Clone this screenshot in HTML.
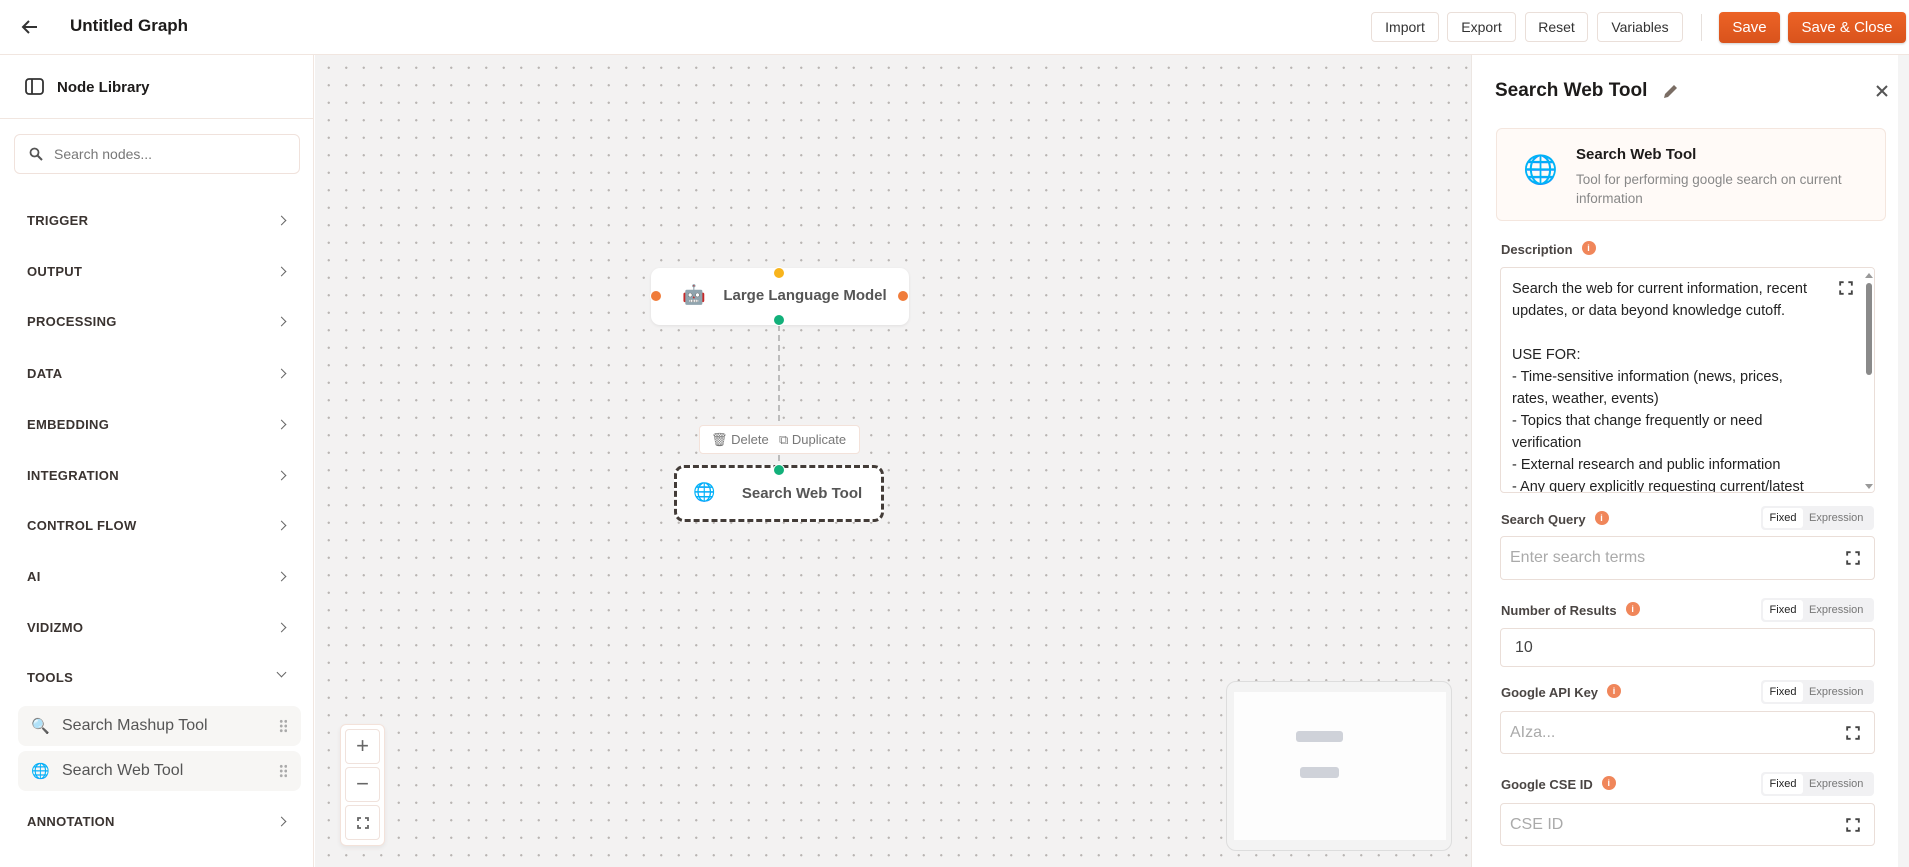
<!DOCTYPE html>
<html><head><meta charset="utf-8"><style>
*{box-sizing:border-box;margin:0;padding:0}
body{width:1909px;height:867px;overflow:hidden;font-family:"Liberation Sans",Arial,sans-serif;background:#fff;position:relative;color:#222}
.abs{position:absolute}
.hdr{left:0;top:0;width:1909px;height:55px;border-bottom:1px solid #f1e6e0;background:#fff}
.btn{position:absolute;top:12px;height:30px;border:1px solid #eadfd9;border-radius:4px;font-size:14px;color:#333;display:flex;align-items:center;justify-content:center;background:#fff}
.obtn{position:absolute;top:12px;height:31px;border-radius:4px;background:linear-gradient(#ec6326,#d9531c);color:#fff;font-size:15px;display:flex;align-items:center;justify-content:center;box-shadow:0 1px 2px rgba(0,0,0,.2)}
.side{left:0;top:55px;width:314px;height:812px;border-right:1px solid #f1e6e0;background:#fff}
.cat{position:absolute;left:27px;font-size:13px;font-weight:bold;color:#3a3330;letter-spacing:.3px}
.chev{position:absolute;left:278px;width:7px;height:7px;border-right:1.5px solid #666;border-top:1.5px solid #666;transform:rotate(45deg)}
.canvas{left:315px;top:55px;width:1156px;height:812px;background-color:#f3f2f2;background-image:radial-gradient(circle,#b9b5b3 1px,transparent 1.3px);background-size:17.5px 17.5px;background-position:5px 4px}
.tool{position:absolute;left:18px;width:283px;height:40px;background:#f7f6f4;border-radius:8px;font-size:16px;color:#555;display:flex;align-items:center}
.grip{position:absolute;right:14px;top:13px;width:8px;height:14px;background-image:radial-gradient(circle,#aaa 1.3px,transparent 1.6px);background-size:4.5px 4.7px}
.h{position:absolute;width:12px;height:12px;border-radius:50%;border:1.5px solid #fff}
.panel{left:1471px;top:55px;width:438px;height:812px;background:#fff;border-left:1px solid #ece6e2}
.lbl{position:absolute;left:29px;font-size:13px;font-weight:bold;color:#4a4543}
.info{display:inline-block;width:14px;height:14px;border-radius:50%;background:#f0865a;color:#fff;font-size:9px;text-align:center;line-height:14px;font-weight:bold;margin-left:9px;vertical-align:3px}
.tog{position:absolute;left:289px;width:113px;height:24px;background:#f1f1f3;border-radius:4px;font-size:11px}
.tog .f{position:absolute;left:2px;top:2px;width:40px;height:20px;background:#fff;border-radius:3px;text-align:center;line-height:20px;color:#222}
.tog .e{position:absolute;left:48px;top:0;line-height:24px;color:#777}
.inp{position:absolute;left:28px;width:375px;border:1px solid #eaded8;border-radius:4px;font-size:16px;color:#aaa;padding-left:9px;display:flex;align-items:center}
.exp{position:absolute;right:14px;width:14px;height:14px}
</style></head><body>
<div class="abs hdr">
  <svg class="abs" style="left:20px;top:17px" width="20" height="20" viewBox="0 0 20 20"><path d="M17 10H4M9 4L3 10l6 6" stroke="#333" stroke-width="2" fill="none"/></svg>
  <div class="abs" style="left:70px;top:16px;font-size:17px;font-weight:bold;color:#1d1b1a">Untitled Graph</div>
  <div class="btn" style="left:1371px;width:68px">Import</div>
  <div class="btn" style="left:1447px;width:69px">Export</div>
  <div class="btn" style="left:1525px;width:63px">Reset</div>
  <div class="btn" style="left:1597px;width:86px">Variables</div>
  <div class="abs" style="left:1701px;top:14px;width:1px;height:27px;background:#e6e0dc"></div>
  <div class="obtn" style="left:1719px;width:61px">Save</div>
  <div class="obtn" style="left:1788px;width:118px">Save &amp; Close</div>
</div>
<div class="abs side">
  <svg class="abs" style="left:25px;top:23px" width="20" height="18" viewBox="0 0 20 18"><rect x="1" y="1" width="17" height="15" rx="3" stroke="#333" stroke-width="1.8" fill="none"/><path d="M7 1v15" stroke="#333" stroke-width="1.8"/></svg>
  <div class="abs" style="left:57px;top:24px;font-size:15px;font-weight:bold;color:#1d1b1a">Node Library</div>
  <div class="abs" style="left:0;top:63px;width:314px;height:1px;background:#f1e6e0"></div>
  <div class="abs" style="left:14px;top:79px;width:286px;height:40px;border:1px solid #f0e2dc;border-radius:6px">
    <svg class="abs" style="left:14px;top:12px" width="14" height="14" viewBox="0 0 14 14"><circle cx="5.5" cy="5.5" r="4" stroke="#555" stroke-width="1.8" fill="none"/><path d="M8.5 8.5L13 13" stroke="#555" stroke-width="2"/></svg>
    <div class="abs" style="left:39px;top:11px;font-size:14px;color:#777">Search nodes...</div>
  </div>
  <div class="cat" style="top:158px">TRIGGER</div><div class="chev" style="top:162px"></div>
  <div class="cat" style="top:209px">OUTPUT</div><div class="chev" style="top:213px"></div>
  <div class="cat" style="top:259px">PROCESSING</div><div class="chev" style="top:263px"></div>
  <div class="cat" style="top:311px">DATA</div><div class="chev" style="top:315px"></div>
  <div class="cat" style="top:362px">EMBEDDING</div><div class="chev" style="top:366px"></div>
  <div class="cat" style="top:413px">INTEGRATION</div><div class="chev" style="top:417px"></div>
  <div class="cat" style="top:463px">CONTROL FLOW</div><div class="chev" style="top:467px"></div>
  <div class="cat" style="top:514px">AI</div><div class="chev" style="top:518px"></div>
  <div class="cat" style="top:565px">VIDIZMO</div><div class="chev" style="top:569px"></div>
  <div class="cat" style="top:615px">TOOLS</div><div class="chev" style="top:614px;transform:rotate(135deg)"></div>
  <div class="tool" style="top:651px"><span style="margin-left:13px;font-size:15px;width:28px">🔍</span><span style="margin-left:3px">Search Mashup Tool</span><div class="grip"></div></div>
  <div class="tool" style="top:696px"><span style="margin-left:13px;font-size:15px;width:28px">🌐</span><span style="margin-left:3px">Search Web Tool</span><div class="grip"></div></div>
  <div class="cat" style="top:759px">ANNOTATION</div><div class="chev" style="top:763px"></div>
</div>
<div class="abs canvas">
  <svg class="abs" style="left:460px;top:270px" width="10" height="150"><path d="M4 0V145" stroke="#aaa" stroke-width="1.5" stroke-dasharray="6 4"/></svg>
  <div class="abs" style="left:336px;top:213px;width:258px;height:57px;background:#fff;border-radius:9px;box-shadow:0 1px 3px rgba(0,0,0,.08)">
    <div class="abs" style="left:31px;top:15px;font-size:19px">🤖</div>
    <div class="abs" style="left:64px;top:19px;width:180px;text-align:center;font-size:15px;font-weight:bold;color:#555">Large Language Model</div>
  </div>
  <div class="h" style="left:458px;top:212px;background:#f8b41c"></div>
  <div class="h" style="left:335px;top:235px;background:#f07c3a"></div>
  <div class="h" style="left:582px;top:235px;background:#f07c3a"></div>
  <div class="h" style="left:458px;top:259px;background:#12b07a"></div>
  <div class="abs" style="left:384px;top:370px;width:161px;height:29px;background:#fff;border:1px solid #f3e2da;border-radius:4px;font-size:13px;color:#777">
    <span class="abs" style="left:11px;top:6px">🗑 Delete</span><span class="abs" style="left:79px;top:6px">⧉ Duplicate</span>
  </div>
  <div class="abs" style="left:359px;top:410px;width:210px;height:57px;background:#fff;border:3px dashed #433c38;border-radius:10px">
    <div class="abs" style="left:16px;top:14px;font-size:18px">🌐</div>
    <div class="abs" style="left:50px;top:17px;width:150px;text-align:center;font-size:15px;font-weight:bold;color:#555">Search Web Tool</div>
  </div>
  <div class="h" style="left:458px;top:409px;background:#12b07a"></div>
  <div class="abs" style="left:25px;top:669px;width:45px;height:122px;background:#fff;border:1px solid #f3e2da;border-radius:6px;box-shadow:0 2px 5px rgba(0,0,0,.06)">
    <div class="abs" style="left:4px;top:4px;width:35px;height:35px;border:1px solid #f0e2dc;border-radius:4px;text-align:center;line-height:32px;font-size:22px;color:#666">+</div>
    <div class="abs" style="left:4px;top:42px;width:35px;height:35px;border:1px solid #f0e2dc;border-radius:4px;text-align:center;line-height:32px;font-size:22px;color:#666">−</div>
    <div class="abs" style="left:4px;top:80px;width:35px;height:35px;border:1px solid #f0e2dc;border-radius:4px"><svg class="abs" style="left:11px;top:11px" width="12" height="12" viewBox="0 0 12 12" fill="none" stroke="#666" stroke-width="1.8"><path d="M1 4V1h3M8 1h3v3M11 8v3H8M4 11H1V8"/></svg></div>
  </div>
  <div class="abs" style="left:911px;top:626px;width:226px;height:170px;background:#f3f3f3;border:1px solid #ddd;border-radius:10px">
    <div class="abs" style="left:7px;top:10px;width:212px;height:148px;background:#fdfdfd"></div>
    <div class="abs" style="left:69px;top:49px;width:47px;height:11px;background:#cfd2d9;border-radius:3px"></div>
    <div class="abs" style="left:73px;top:85px;width:39px;height:11px;background:#cfd2d9;border-radius:3px"></div>
  </div>
</div>
<div class="abs panel">
  <div class="abs" style="left:23px;top:25px;font-size:19px;font-weight:bold;color:#1d1b1a">Search Web Tool</div>
  <svg class="abs" style="left:190px;top:27px" width="18" height="18" viewBox="0 0 18 18"><path d="M2 16l1-4L12 3l3 3-9 9z" fill="#7a6d64"/></svg>
  <svg class="abs" style="left:403px;top:29px" width="14" height="14" viewBox="0 0 14 14"><path d="M2 2l10 10M12 2L2 12" stroke="#555" stroke-width="2"/></svg>
  <div class="abs" style="left:24px;top:73px;width:390px;height:93px;background:#fffaf7;border:1px solid #f4e6de;border-radius:6px">
    <div class="abs" style="left:26px;top:24px;font-size:28px">🌐</div>
    <div class="abs" style="left:79px;top:17px;font-size:15px;font-weight:bold;color:#1d1b1a">Search Web Tool</div>
    <div class="abs" style="left:79px;top:41px;width:290px;font-size:13.5px;line-height:19px;color:#888">Tool for performing google search on current information</div>
  </div>
  <div class="lbl" style="top:186px">Description<span class="info">i</span></div>
  <div class="abs" style="left:28px;top:212px;width:375px;height:226px;border:1px solid #eaded8;border-radius:4px;overflow:hidden">
    <div class="abs" style="left:11px;top:10px;width:302px;font-size:14.5px;line-height:22px;color:#222">Search the web for current information, recent updates, or data beyond knowledge cutoff.<br><br>USE FOR:<br>- Time-sensitive information (news, prices, rates, weather, events)<br>- Topics that change frequently or need verification<br>- External research and public information<br>- Any query explicitly requesting current/latest</div>
    <svg class="abs" style="left:338px;top:13px" width="14" height="14" viewBox="0 0 12 12" fill="none" stroke="#444" stroke-width="1.6"><path d="M1 4V1h3M8 1h3v3M11 8v3H8M4 11H1V8"/></svg>
    <div class="abs" style="left:363px;top:0;width:11px;height:226px;background:#fff"></div>
    <div class="abs" style="left:365px;top:15px;width:6px;height:92px;background:#8a8a8a;border-radius:3px"></div>
    <div class="abs" style="left:364px;top:5px;border:4px solid transparent;border-bottom:5px solid #999;border-top:0"></div>
    <div class="abs" style="left:364px;top:216px;border:4px solid transparent;border-top:5px solid #999;border-bottom:0"></div>
  </div>
  <div class="lbl" style="top:456px">Search Query<span class="info">i</span></div>
  <div class="tog" style="top:451px"><div class="f">Fixed</div><div class="e">Expression</div></div>
  <div class="inp" style="top:481px;height:44px">Enter search terms<svg class="exp" style="top:14px" viewBox="0 0 12 12" fill="none" stroke="#444" stroke-width="1.6"><path d="M1 4V1h3M8 1h3v3M11 8v3H8M4 11H1V8"/></svg></div>
  <div class="lbl" style="top:547px">Number of Results<span class="info">i</span></div>
  <div class="tog" style="top:543px"><div class="f">Fixed</div><div class="e">Expression</div></div>
  <div class="inp" style="top:573px;height:39px;color:#444;padding-left:14px">10</div>
  <div class="lbl" style="top:629px">Google API Key<span class="info">i</span></div>
  <div class="tog" style="top:625px"><div class="f">Fixed</div><div class="e">Expression</div></div>
  <div class="inp" style="top:656px;height:43px">AIza...<svg class="exp" style="top:14px" viewBox="0 0 12 12" fill="none" stroke="#444" stroke-width="1.6"><path d="M1 4V1h3M8 1h3v3M11 8v3H8M4 11H1V8"/></svg></div>
  <div class="lbl" style="top:721px">Google CSE ID<span class="info">i</span></div>
  <div class="tog" style="top:717px"><div class="f">Fixed</div><div class="e">Expression</div></div>
  <div class="inp" style="top:748px;height:43px">CSE ID<svg class="exp" style="top:14px" viewBox="0 0 12 12" fill="none" stroke="#444" stroke-width="1.6"><path d="M1 4V1h3M8 1h3v3M11 8v3H8M4 11H1V8"/></svg></div>
  <div class="abs" style="left:426px;top:0;width:12px;height:812px;background:#f4f4f4"></div>
</div>
</body></html>
